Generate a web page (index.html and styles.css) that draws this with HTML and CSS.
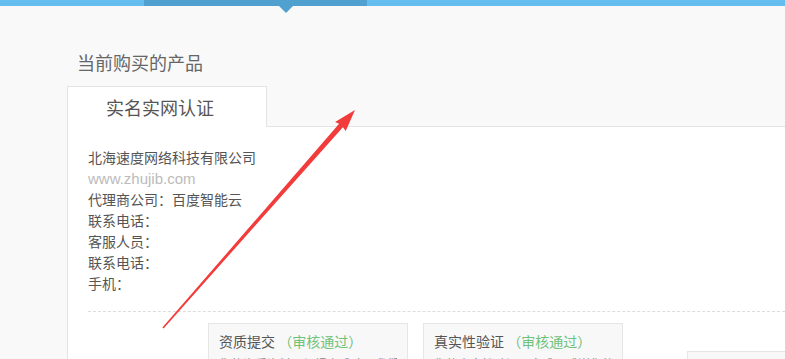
FILE: index.html
```html
<!DOCTYPE html>
<html lang="zh-CN">
  <head>
    <meta charset="UTF-8" />
    <meta name="viewport" content="width=device-width, initial-scale=1.0" />
    <title>当前购买的产品</title>
    <link rel="stylesheet" href="styles.css">
  </head>

  <body>
    <div class="topbar">
      <div class="seg first"></div>
      <div class="seg active"></div>
      <div class="seg rest"></div>
    </div>

    <div class="main">
      <h2 class="title">当前购买的产品</h2>

      <div class="tabs">
        <div class="tab">实名实网认证</div>
      </div>

      <div class="panel">
        <ul class="info">
          <li>北海速度网络科技有限公司</li>
          <li class="site">www.zhujib.com</li>
          <li>代理商公司：百度智能云</li>
          <li>联系电话：</li>
          <li>客服人员：</li>
          <li>联系电话：</li>
          <li>手机：</li>
        </ul>

        <div class="steps">
          <div class="card">
            <div class="card-title">资质提交 <span class="ok">（审核通过）</span></div>
            <p class="card-text">您的资质资料已经提交成功，我们将尽快审核</p>
          </div>
          <div class="card">
            <div class="card-title">真实性验证 <span class="ok">（审核通过）</span></div>
            <p class="card-text">您的真实性验证已完成，感谢您的配合</p>
          </div>
          <div class="card last">
            <div class="card-title">&nbsp;</div>
          </div>
        </div>
      </div>
    </div>

    <!-- annotation arrow -->
    <svg class="arrow" width="785" height="359" viewBox="0 0 785 359">
      <polygon fill="#f23b3b" points="163.6,328.5 162.4,327.5 339.1,123.8 335.1,121.9 355,110 345.7,131.1 342.9,127.2" />
    </svg>
  </body>
</html>
```

FILE: styles.css
```css
* {
  box-sizing: border-box;
  padding: 0;
  margin: 0;
}
body {
  background: #f9f9f9;
  font-family: "Noto Sans CJK SC", "Liberation Sans", sans-serif;
  color: #555;
  height: 359px;
  overflow: hidden;
  position: relative;
}
.topbar {
  display: flex;
  height: 6px;
}
.seg.first {
  width: 144px;
  background: #65bdf0;
}
.seg.active {
  width: 223px;
  background: #51a1d0;
  position: relative;
}
.seg.active::after {
  content: "";
  position: absolute;
  left: 135px;
  top: 6px;
  border-left: 7px solid transparent;
  border-right: 7px solid transparent;
  border-top: 7px solid #51a1d0;
}
.seg.rest {
  flex: 1;
  background: #65bdf0;
}
.main {
  padding-left: 67px;
}
.title {
  margin-top: 44px;
  margin-left: 10px;
  font-size: 18px;
  font-weight: normal;
  line-height: 24px;
  color: #666;
}
.tabs {
  display: flex;
  margin-top: 12px;
  position: relative;
  z-index: 1;
}
.tab {
  width: 200px;
  height: 41px;
  margin-bottom: -1px;
  background: #fff;
  border: 1px solid #e4e4e4;
  border-bottom: none;
  font-size: 18px;
  line-height: 40px;
  padding-left: 38px;
  color: #555;
}
.panel {
  background: #fff;
  border-top: 1px solid #e4e4e4;
  border-left: 1px solid #e4e4e4;
  padding: 20px 0 0 20px;
  height: 240px;
}
.info {
  list-style: none;
  font-size: 14px;
  line-height: 21px;
  color: #555;
}
.info .site {
  font-family: "Liberation Sans", "Noto Sans CJK SC", sans-serif;
  font-size: 15px;
  color: #bbb;
}
.steps {
  display: flex;
  align-items: flex-start;
  margin-top: 17px;
  padding-top: 11px;
  padding-left: 120px;
  border-top: 1px dashed #ddd;
}
.card {
  width: 200px;
  height: 60px;
  flex-shrink: 0;
  background: #f8f8f8;
  border: 1px solid #e6e6e6;
  padding: 7px 10px;
  margin-right: 15px;
}
.card.last {
  margin-left: 49px;
  margin-top: 28px;
}
.card-title {
  font-size: 14px;
  line-height: 20px;
  color: #555;
}
.ok {
  color: #6fc27a;
}
.card-text {
  margin-top: 4px;
  font-size: 12px;
  line-height: 18px;
  color: #888;
  white-space: nowrap;
  overflow: hidden;
}
.arrow {
  position: absolute;
  left: 0;
  top: 0;
  pointer-events: none;
}
```
